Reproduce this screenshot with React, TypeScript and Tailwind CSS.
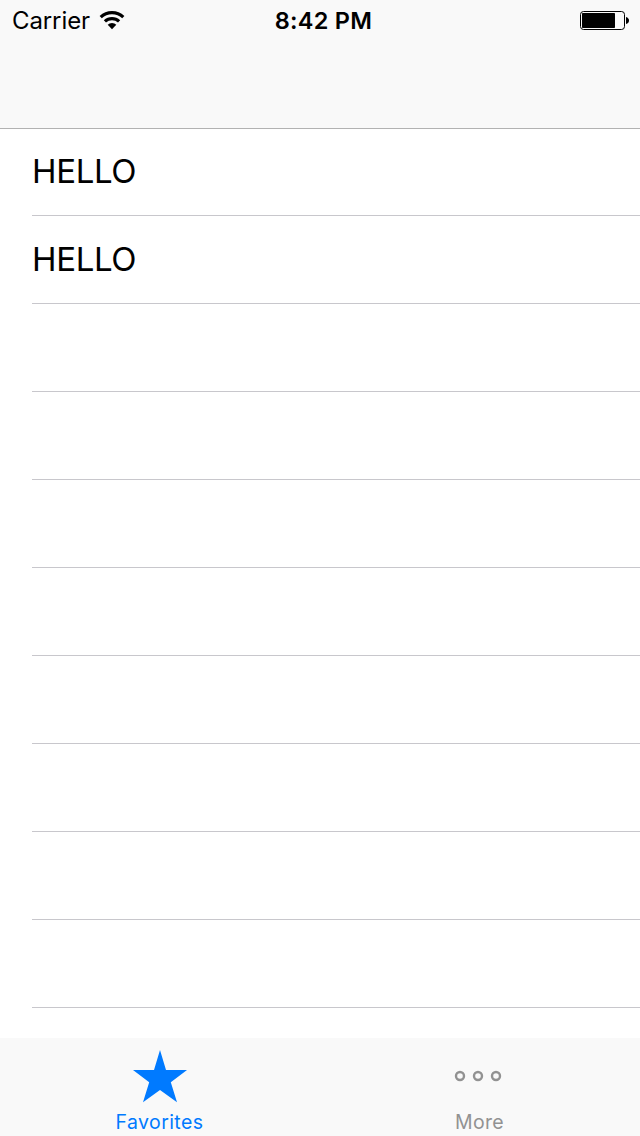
import React from "react";

const rows = ["HELLO", "HELLO", "", "", "", "", "", "", "", ""];

function WifiIcon() {
  return (
    <svg width="26" height="20" viewBox="0 0 26 20" fill="none" stroke="#000" strokeWidth="3.2">
      <path d="M1.7 7.2 A16.5 16.5 0 0 1 24.3 7.2" />
      <path d="M5.9 11.4 A10.4 10.4 0 0 1 20.1 11.4" />
      <path d="M13 19.2 L8.7 14.8 A5.8 5.8 0 0 1 17.3 14.8 Z" fill="#000" stroke="none" />
    </svg>
  );
}

function BatteryIcon() {
  return (
    <svg width="49" height="19" viewBox="0 0 49 19">
      <rect x="0.5" y="0.5" width="44" height="18" rx="3" fill="none" stroke="#000" />
      <rect x="2" y="2" width="33" height="15" rx="0.8" fill="#000" />
      <path d="M46 6 Q49 7 49 9.5 Q49 12 46 13 Z" fill="#000" />
    </svg>
  );
}

export default function App() {
  return (
    <div className="flex h-[1136px] w-[640px] flex-col overflow-hidden bg-white font-['Inter',sans-serif] text-black">
      <header className="h-[129px] shrink-0 border-b border-[#b2b2b2] bg-[#f9f9f9]">
        <div className="flex h-10 items-center justify-between pr-[11px] pl-3">
          <div className="flex w-[200px] items-center gap-[9px]">
            <span className="pt-0.5 text-[24px] leading-10 tracking-[-0.1px]">Carrier</span>
            <WifiIcon />
          </div>
          <span className="pt-0.5 pl-1.5 text-[23.5px] leading-10 font-semibold tracking-[0.25px]">8:42 PM</span>
          <div className="flex w-[200px] justify-end">
            <BatteryIcon />
          </div>
        </div>
      </header>
      <main className="min-h-0 flex-1 overflow-hidden pl-8">
        {rows.map((label, i) => (
          <div key={i} className={`border-b border-[#c8c7cc] text-[33px] leading-10 tracking-[-0.35px] ${i === 0 ? "h-[87px] pt-[22px]" : "h-[88px] pt-[23px]"}`}>
            {label}
          </div>
        ))}
      </main>
      <nav className="grid h-[98px] shrink-0 grid-cols-2 bg-[#f9f9f9] text-[20px]">
        <div className="flex flex-col items-center text-[#007aff]">
          <svg className="mt-3" width="54" height="53" viewBox="0 0 54 53" fill="currentColor">
            <path d="M27 0 L33 20 H54 L37.8 32.3 L44 52.3 L27 40 L10 52.3 L16.2 32.3 L0 20 H21 Z" />
          </svg>
          <span className="mt-[7px] pr-px text-[19.5px] leading-6 tracking-[0.4px]">Favorites</span>
        </div>
        <div className="flex flex-col items-center pr-[2px] text-[#929292]">
          <svg className="mt-8 mr-[2px]" width="48" height="12" viewBox="0 0 48 12" fill="none" stroke="currentColor" strokeWidth="2.4">
            <circle cx="6" cy="6" r="4" /><circle cx="24" cy="6" r="4" /><circle cx="42" cy="6" r="4" />
          </svg>
          <span className="mt-7 pl-px text-[19.5px] leading-6 tracking-[0.3px]">More</span>
        </div>
      </nav>
    </div>
  );
}
